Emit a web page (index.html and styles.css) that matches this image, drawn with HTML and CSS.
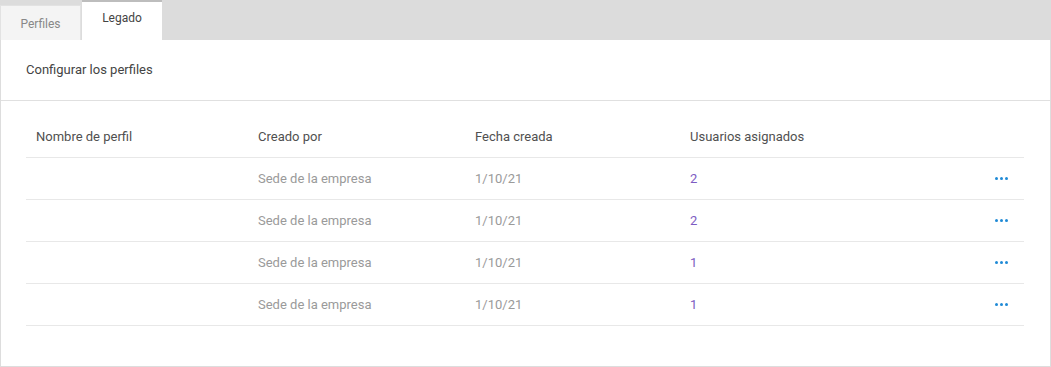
FILE: index.html
```html
<!DOCTYPE html>
<html lang="es">
<head>
  <meta charset="UTF-8" />
  <title>Perfiles</title>
  <link rel="stylesheet" href="styles.css">
</head>
<body>
<div class="tabs">
  <div class="tab">Perfiles</div>
  <div class="tab active">Legado</div>
</div>
<div class="panel">
  <div class="panel-head">Configurar los perfiles</div>
  <div class="grid">
    <div class="row head">
      <div>Nombre de perfil</div>
      <div>Creado por</div>
      <div>Fecha creada</div>
      <div>Usuarios asignados</div>
      <div></div>
    </div>
    <div class="row">
      <div></div>
      <div class="muted">Sede de la empresa</div>
      <div class="muted">1/10/21</div>
      <div class="count">2</div>
      <div class="more"><span></span><span></span><span></span></div>
    </div>
    <div class="row">
      <div></div>
      <div class="muted">Sede de la empresa</div>
      <div class="muted">1/10/21</div>
      <div class="count">2</div>
      <div class="more"><span></span><span></span><span></span></div>
    </div>
    <div class="row">
      <div></div>
      <div class="muted">Sede de la empresa</div>
      <div class="muted">1/10/21</div>
      <div class="count">1</div>
      <div class="more"><span></span><span></span><span></span></div>
    </div>
    <div class="row">
      <div></div>
      <div class="muted">Sede de la empresa</div>
      <div class="muted">1/10/21</div>
      <div class="count">1</div>
      <div class="more"><span></span><span></span><span></span></div>
    </div>
  </div>
</div>
</body>
</html>
```

FILE: styles.css
```css
* {
  box-sizing: border-box;
}
body {
  margin: 0;
  font-family: Roboto, 'Liberation Sans', sans-serif;
  font-size: 13px;
  color: #444;
  background: #fff;
}
.tabs {
  display: flex;
  align-items: flex-end;
  height: 40px;
  background: #dcdcdc;
}
.tab {
  width: 81px;
  height: 35px;
  display: flex;
  align-items: center;
  justify-content: center;
  background: #f4f4f4;
  border: 1px solid #e2e2e2;
  border-bottom: none;
  color: #888;
  font-size: 12px;
  padding-top: 2px;
}
.tab.active {
  margin-left: 1px;
  width: 80px;
  height: 40px;
  background: #fff;
  border: none;
  border-top: 2px solid #bdbdbd;
  color: #444;
  padding-top: 0;
  padding-bottom: 6px;
}
.panel {
  width: 1051px;
  height: 327px;
  border: 1px solid #ddd;
  border-top: none;
}
.panel-head {
  height: 61px;
  display: flex;
  align-items: center;
  padding: 0 25px 1px 25px;
  border-bottom: 1px solid #e0e0e0;
}
.grid {
  margin: 15px 26px 0 25px;
}
.row {
  display: grid;
  grid-template-columns: 222px 217px 215px 1fr 40px;
  height: 42px;
  align-items: center;
  border-bottom: 1px solid #e8e8e8;
}
.row > div {
  padding-left: 10px;
}
.row.head {
  color: #505050;
  padding-bottom: 1px;
}
.muted {
  color: #9a9a9a;
}
.count {
  color: #7d5cc2;
}
.row > .more {
  display: flex;
  gap: 2px;
  padding-left: 11px;
}
.more span {
  width: 3px;
  height: 3px;
  border-radius: 50%;
  background: #1f8ad6;
}
```
